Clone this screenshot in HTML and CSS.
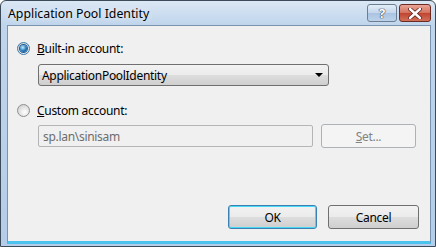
FILE: index.html
```html
<!DOCTYPE html>
<html lang="en">
<head>
	<meta charset="UTF-8">
	<title>Application Pool Identity</title>
	<link rel="stylesheet" href="styles.css">
</head>
<body>
	<div class="window">
		<div class="titlebar">
			<span class="title">Application Pool Identity</span>
			<div class="caption-buttons">
				<span class="cap-btn cap-help">?</span>
				<span class="cap-btn cap-close">
					<svg width="14" height="11" viewBox="0 0 14 11">
						<path d="M2 1 L12 10 M12 1 L2 10" stroke="#5a2018" stroke-width="4" stroke-linecap="round"/>
						<path d="M2 1 L12 10 M12 1 L2 10" stroke="#ffffff" stroke-width="2.4" stroke-linecap="round"/>
					</svg>
				</span>
			</div>
		</div>
		<div class="client">
			<div class="option-row">
				<span class="radio checked"></span>
				<span class="label"><u>B</u>uilt-in account:</span>
			</div>
			<div class="combo">
				<span>ApplicationPoolIdentity</span>
				<span class="arrow"></span>
			</div>
			<div class="option-row option-custom">
				<span class="radio"></span>
				<span class="label"><u>C</u>ustom account:</span>
			</div>
			<div class="custom-row">
				<div class="textbox">sp.lan\sinisam</div>
				<div class="btn btn-disabled"><u>S</u>et...</div>
			</div>
			<div class="footer">
				<div class="btn btn-default">OK</div>
				<div class="btn">Cancel</div>
			</div>
		</div>
	</div>
</body>
</html>
```

FILE: styles.css
```css
body {
	margin: 0;
	background: #ffffff;
	font-family: "Noto Sans", "Open Sans", sans-serif;
	font-size: 12px;
}

.window {
	width: 436px;
	height: 247px;
	box-sizing: border-box;
	display: flex;
	flex-direction: column;
	border: 1px solid #3c4a5a;
	border-radius: 6px 6px 0 0;
	background: linear-gradient(#dbe7f4, #bfd5ec 24px, #b4cde8);
	padding: 0 4px 2px 6px;
}

.titlebar {
	height: 24px;
	display: flex;
	justify-content: space-between;
	flex-shrink: 0;
}

.title {
	padding: 4px 0 0 1px;
	color: #000000;
	font-size: 12.3px;
	text-shadow: 0 0 6px #ffffff;
}

.caption-buttons {
	display: flex;
	gap: 2px;
	padding-top: 3px;
}

.cap-btn {
	height: 18px;
	box-sizing: border-box;
	border: 1px solid #6d7e93;
	border-radius: 3px;
	display: flex;
	align-items: center;
	justify-content: center;
}

.cap-help {
	width: 30px;
	background: linear-gradient(#e3edf8, #c3d6ec 50%, #aac3e1 51%, #bcd2ea);
	color: #ffffff;
	font-weight: bold;
	font-size: 13px;
	text-shadow: 0 0 1px #2a3a50, 0 0 1px #2a3a50, 0 0 1px #2a3a50;
}

.cap-close {
	width: 32px;
	border-color: #6b2b23;
	background: linear-gradient(#e8a596, #d4705e 50%, #c04430 51%, #d2705a);
}

.client {
	flex: 1;
	display: flex;
	flex-direction: column;
	background: #f0f0f0;
	border: 1px solid #7b93ad;
	border-bottom: 3px solid #4cc3ee;
	padding: 14px 11px 0 9px;
	letter-spacing: -0.3px;
}

.option-row {
	display: flex;
	align-items: center;
	gap: 7px;
	height: 16px;
}

.option-custom {
	margin-top: 16px;
}

.radio {
	width: 13px;
	height: 13px;
	box-sizing: border-box;
	border-radius: 50%;
	border: 1px solid #8e8f8f;
	background: radial-gradient(circle at 60% 65%, #ffffff, #e3e3e3 50%, #c9c9c9);
	position: relative;
}

.radio.checked {
	border-color: #3d7bad;
}

.radio.checked::after {
	content: "";
	position: absolute;
	left: 2px;
	top: 2px;
	width: 7px;
	height: 7px;
	border-radius: 50%;
	background: radial-gradient(circle at 40% 35%, #c8ecff, #1f78bd 55%, #0a3f75);
	box-shadow: 0 0 0 1px #1d5a8e;
}

.label {
	color: #000000;
}

.combo {
	margin: 8px 0 0 21px;
	width: 291px;
	height: 22px;
	box-sizing: border-box;
	border: 1px solid #707070;
	border-radius: 3px;
	background: linear-gradient(#f2f2f2, #ebebeb 50%, #dddddd 51%, #cfcfcf);
	display: flex;
	align-items: center;
	justify-content: space-between;
	padding: 0 5px 0 3px;
}

.arrow {
	width: 0;
	height: 0;
	border-left: 4px solid transparent;
	border-right: 4px solid transparent;
	border-top: 4px solid #000000;
}

.custom-row {
	margin: 6px 0 0 21px;
	display: flex;
	align-items: center;
	gap: 8px;
}

.textbox {
	width: 275px;
	height: 22px;
	box-sizing: border-box;
	border: 1px solid #b5b5b5;
	border-radius: 2px;
	background: #f0f0f0;
	color: #6d6d6d;
	padding: 2px 4px;
}

.btn {
	width: 91px;
	height: 24px;
	box-sizing: border-box;
	border: 1px solid #707070;
	border-radius: 3px;
	background: linear-gradient(#f2f2f2, #ebebeb 50%, #dddddd 51%, #cfcfcf);
	display: flex;
	align-items: center;
	justify-content: center;
	color: #000000;
}

.btn-disabled {
	width: 95px;
	border-color: #adb2b5;
	background: #f4f4f4;
	color: #838383;
}

.btn-default {
	width: 89px;
	border-color: #3c7fb1;
	box-shadow: inset 0 0 0 1px #48d8f8;
}

.footer {
	margin-top: 57px;
	display: flex;
	justify-content: flex-end;
	gap: 11px;
}
```
